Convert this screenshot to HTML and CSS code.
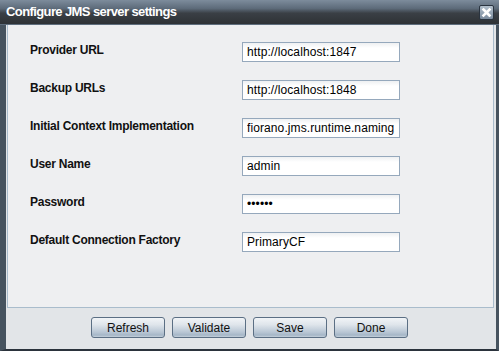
FILE: index.html
```html
<!DOCTYPE html>
<html lang="en">
<head>
    <meta charset="UTF-8">
    <title>Configure JMS server settings</title>
    <link rel="stylesheet" href="styles.css">
</head>
<body>
    <div class="window">
        <div class="titlebar">
            <span class="title">Configure JMS server settings</span>
            <span class="close">
                <svg width="13" height="13" viewBox="0 0 13 13">
                    <path d="M3.5 3.5 L9.5 9.5 M9.5 3.5 L3.5 9.5" stroke="#fff" stroke-width="2.6" stroke-linecap="square"/>
                </svg>
            </span>
        </div>

        <div class="frame">
            <div class="panel">
                <div class="form">
                    <label>Provider URL</label>
                    <input type="text" value="http://localhost:1847">

                    <label>Backup URLs</label>
                    <input type="text" value="http://localhost:1848">

                    <label>Initial Context Implementation</label>
                    <input type="text" value="fiorano.jms.runtime.naming.FioranoInitialContextFactory">

                    <label>User Name</label>
                    <input type="text" value="admin">

                    <label>Password</label>
                    <input type="password" value="passwd">

                    <label>Default Connection Factory</label>
                    <input type="text" value="PrimaryCF">
                </div>
            </div>

            <div class="buttons">
                <button>Refresh</button>
                <button>Validate</button>
                <button>Save</button>
                <button>Done</button>
            </div>
        </div>
    </div>
</body>
</html>
```

FILE: styles.css
```css
body {
    margin: 0;
    padding: 0;
    font-family: "Liberation Sans", Arial, sans-serif;
    background: #3b4653;
}

.window {
    width: 499px;
    height: 351px;
    display: flex;
    flex-direction: column;
    box-sizing: border-box;
    background: #3b4653;
}

.titlebar {
    height: 24px;
    flex: none;
    display: flex;
    align-items: center;
    justify-content: space-between;
    padding: 0 5px 0 6px;
    background: linear-gradient(#7d8c9c 0%, #5d6b7a 35%, #3a3f45 55%, #2e3236 100%);
    border-bottom: 1px solid #5e6d7d;
}

.title {
    color: #fff;
    font-weight: bold;
    font-size: 13px;
    letter-spacing: -0.6px;
    margin-top: -1px;
}

.close {
    width: 15px;
    height: 15px;
    box-sizing: border-box;
    border: 1px solid #2a3440;
    border-radius: 2px;
    background: linear-gradient(#b3c0cc, #7a8b9d);
    display: flex;
}

.frame {
    flex: 1;
    display: flex;
    flex-direction: column;
    border-left: 6px solid #46535f;
    border-right: 3px solid #46535f;
    border-bottom: 2px solid #2b333c;
    background: #e2e5e8;
}

.panel {
    height: 283px;
    box-sizing: border-box;
    margin: 0 2px 0 1px;
    border: 1px solid #a9bccc;
    border-top: none;
    background: #eeeff1;
}

.form {
    display: grid;
    grid-template-columns: 212px 158px;
    row-gap: 18px;
    padding: 17px 0 0 22px;
    align-items: center;
}

label {
    font-size: 12px;
    font-weight: bold;
    letter-spacing: -0.25px;
    color: #111;
    margin-top: -4px;
}

input {
    width: 158px;
    height: 20px;
    box-sizing: border-box;
    margin: 0;
    padding: 0 4px;
    border: 1px solid #95a8bc;
    border-radius: 0;
    background: linear-gradient(#eef0f2 0px, #fff 5px);
    font-family: "Liberation Sans", Arial, sans-serif;
    font-size: 12px;
    letter-spacing: 0.1px;
    color: #000;
    outline: none;
}

.buttons {
    flex: 1;
    display: flex;
    justify-content: center;
    gap: 7px;
    padding: 9px 3px 0 0;
    box-sizing: border-box;
}

button {
    width: 74px;
    height: 21px;
    box-sizing: border-box;
    padding: 0;
    border: 1px solid #5b6f84;
    border-radius: 3px;
    background: linear-gradient(#f1f4f7 0%, #dfe5eb 35%, #b8c6d4 75%, #a5b6c7 90%, #c4d0db 100%);
    font-family: "Liberation Sans", Arial, sans-serif;
    font-size: 12px;
    color: #111;
}
```
